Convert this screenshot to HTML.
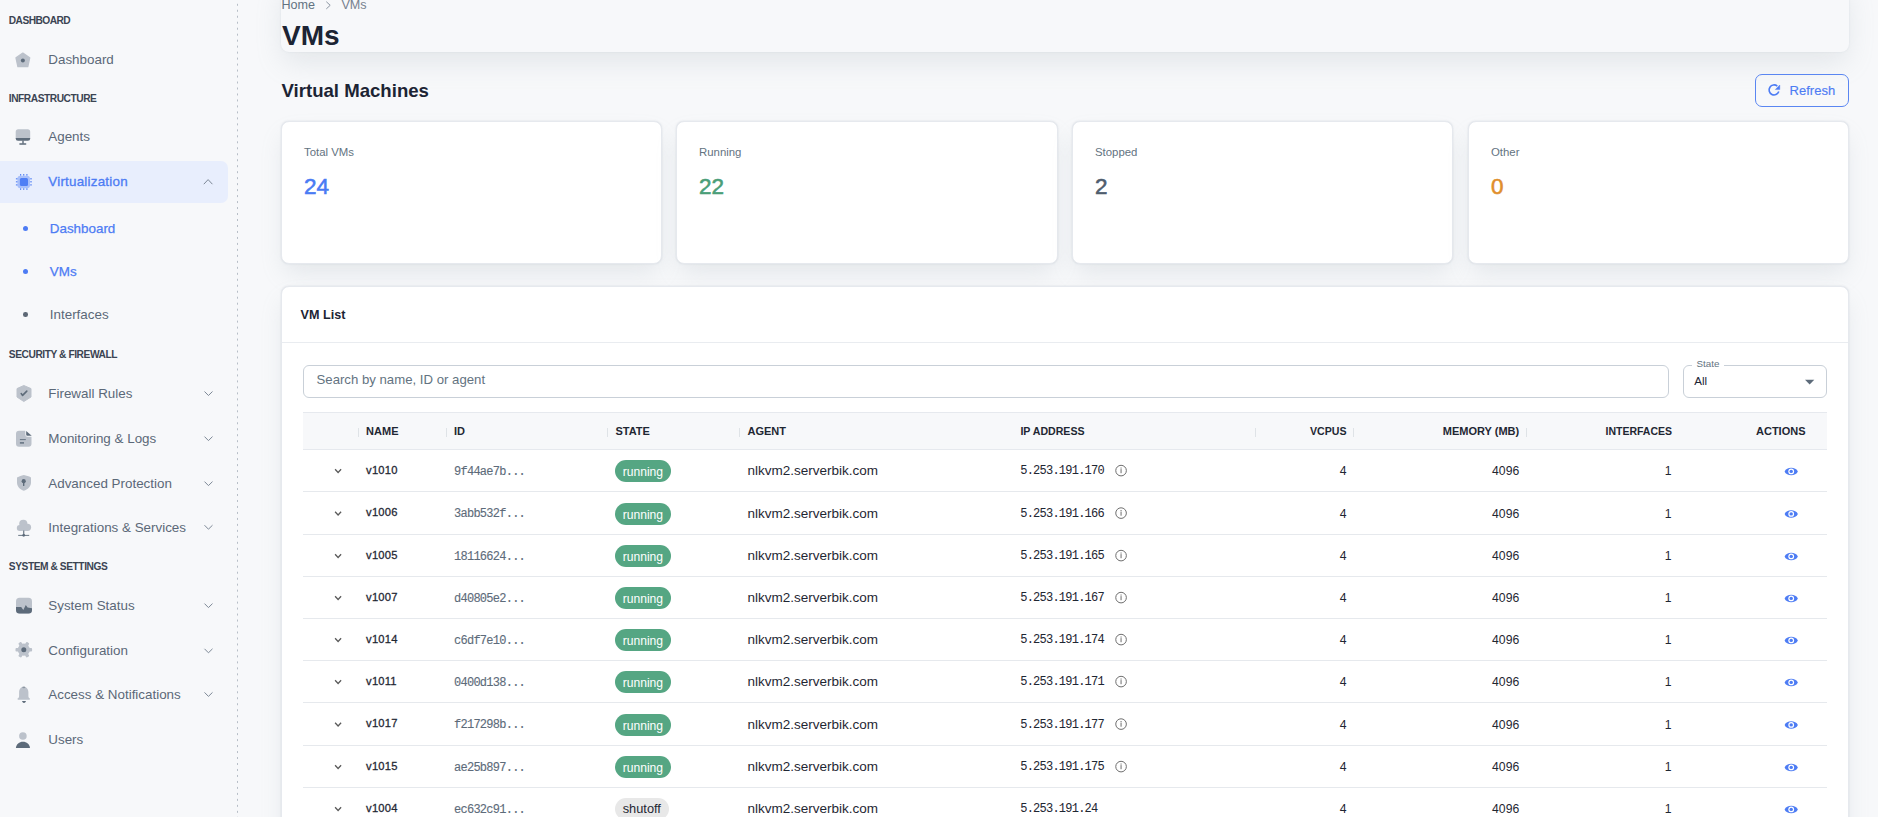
<!DOCTYPE html><html><head><meta charset="utf-8"><style>
html,body{margin:0;padding:0;}
body{width:1878px;height:817px;overflow:hidden;position:relative;background:#f7f8fa;font-family:'Liberation Sans', sans-serif;}
.t{position:absolute;white-space:nowrap;}
.b{position:absolute;}
</style></head><body>
<svg class="b" style="left:236px;top:0;width:3px;height:817px" viewBox="0 0 3 817"><line x1="1.5" y1="0" x2="1.5" y2="817" stroke="#b7bec7" stroke-width="1" stroke-dasharray="2 3.978" stroke-dashoffset="-3.8"/></svg>
<div class="t" style="left:8.80px;top:16.26px;font-size:10.2px;line-height:10.2px;color:#3b4452;font-weight:700;font-family:'Liberation Sans', sans-serif;letter-spacing:-0.55px">DASHBOARD</div>
<div class="t" style="left:8.80px;top:94.06px;font-size:10.2px;line-height:10.2px;color:#3b4452;font-weight:700;font-family:'Liberation Sans', sans-serif;letter-spacing:-0.45px">INFRASTRUCTURE</div>
<div class="t" style="left:8.80px;top:350.36px;font-size:10.2px;line-height:10.2px;color:#3b4452;font-weight:700;font-family:'Liberation Sans', sans-serif;letter-spacing:-0.43px">SECURITY &amp; FIREWALL</div>
<div class="t" style="left:8.80px;top:561.86px;font-size:10.2px;line-height:10.2px;color:#3b4452;font-weight:700;font-family:'Liberation Sans', sans-serif;letter-spacing:-0.43px">SYSTEM &amp; SETTINGS</div>
<div class="b" style="left:-8px;top:161px;width:236px;height:42px;background:#e8eefd;border-radius:7px"></div>
<svg class="b" style="left:10px;top:45px;width:30px;height:30px" viewBox="0 0 30 30"><path d="M12.85 8.1 L19.7 12.9 L17.8 21.5 L7.9 21.5 L6.0 12.9 Z" fill="#bcc2cb" stroke="#bcc2cb" stroke-width="1.3" stroke-linejoin="round"/><circle cx="12.85" cy="15.6" r="2" fill="#5d6b7a"/></svg>
<div class="t" style="left:48.30px;top:52.75px;font-size:13.4px;line-height:13.4px;color:#5b6878;font-weight:400;font-family:'Liberation Sans', sans-serif;">Dashboard</div>
<svg class="b" style="left:10px;top:122px;width:30px;height:30px" viewBox="0 0 30 30"><path d="M8.2 7.3 H17.7 A2.5 2.5 0 0 1 20.2 9.8 V16 H5.7 V9.8 A2.5 2.5 0 0 1 8.2 7.3Z" fill="#bcc2cb"/><path d="M5.7 16 H20.2 V16.4 A2.3 2.3 0 0 1 17.9 18.7 H8 A2.3 2.3 0 0 1 5.7 16.4Z" fill="#5d6b7a"/><rect x="12.3" y="18.5" width="1.4" height="3.2" fill="#5d6b7a"/><rect x="9.2" y="21.2" width="7.2" height="1.6" rx="0.8" fill="#5d6b7a"/></svg>
<div class="t" style="left:48.30px;top:130.45px;font-size:13.4px;line-height:13.4px;color:#5b6878;font-weight:400;font-family:'Liberation Sans', sans-serif;">Agents</div>
<svg class="b" style="left:10px;top:167px;width:30px;height:30px" viewBox="0 0 30 30"><rect x="7.4" y="8.8" width="12.6" height="12.4" rx="3" fill="#a8bffa"/><rect x="9.9" y="11" width="8.1" height="7.9" rx="1.5" fill="#4f7ef5"/><rect x="10.0" y="7" width="1.2" height="1.6" fill="#5a86f5"/><rect x="10.0" y="21.3" width="1.2" height="1.6" fill="#5a86f5"/><rect x="13.1" y="7" width="1.2" height="1.6" fill="#5a86f5"/><rect x="13.1" y="21.3" width="1.2" height="1.6" fill="#5a86f5"/><rect x="16.299999999999997" y="7" width="1.2" height="1.6" fill="#5a86f5"/><rect x="16.299999999999997" y="21.3" width="1.2" height="1.6" fill="#5a86f5"/><rect x="5.9" y="11.200000000000001" width="1.6" height="1.2" fill="#5a86f5"/><rect x="20.2" y="11.200000000000001" width="1.6" height="1.2" fill="#5a86f5"/><rect x="5.9" y="14.200000000000001" width="1.6" height="1.2" fill="#5a86f5"/><rect x="20.2" y="14.200000000000001" width="1.6" height="1.2" fill="#5a86f5"/><rect x="5.9" y="17.299999999999997" width="1.6" height="1.2" fill="#5a86f5"/><rect x="20.2" y="17.299999999999997" width="1.6" height="1.2" fill="#5a86f5"/></svg>
<div class="t" style="left:48.30px;top:174.85px;font-size:13.4px;line-height:13.4px;color:#4d7cf4;font-weight:400;font-family:'Liberation Sans', sans-serif;letter-spacing:0.22px;-webkit-text-stroke:0.3px #4d7cf4">Virtualization</div>
<svg class="b" style="left:200px;top:175px;width:16px;height:12px" viewBox="0 0 16 12"><path d="M3.8 9.2 L8.1 4.6 L12.4 9.2" fill="none" stroke="#7d8896" stroke-width="1"/></svg>
<svg class="b" style="left:10px;top:378px;width:30px;height:30px" viewBox="0 0 30 30"><path d="M13.8 7.5 L21 10.6 V19 L13.8 23.5 L7 19 V10.6 Z" fill="#bcc2cb" stroke="#bcc2cb" stroke-width="1" stroke-linejoin="round"/><path d="M11.2 15.6 L12.6 17.4 L16.8 13.1" fill="none" stroke="#5d6b7a" stroke-width="1.6" stroke-linecap="round" stroke-linejoin="round"/></svg>
<div class="t" style="left:48.30px;top:386.95px;font-size:13.4px;line-height:13.4px;color:#5b6878;font-weight:400;font-family:'Liberation Sans', sans-serif;">Firewall Rules</div>
<svg class="b" style="left:200px;top:387px;width:16px;height:12px" viewBox="0 0 16 12"><path d="M4.5 4.50 L8.45 8.50 L12.5 4.50" fill="none" stroke="#7d8896" stroke-width="1"/></svg>
<svg class="b" style="left:10px;top:423px;width:30px;height:30px" viewBox="0 0 30 30"><path d="M9 7.7 H15.3 V11.5 A2.3 2.3 0 0 0 17.6 13.8 H21.5 V20.7 A3 3 0 0 1 18.5 23.7 H9 A3 3 0 0 1 6 20.7 V10.7 A3 3 0 0 1 9 7.7Z" fill="#bcc2cb"/><path d="M16.2 7.9 L21.7 12.8 H17.2 A1 1 0 0 1 16.2 11.8Z" fill="#5d6b7a"/><rect x="9.9" y="16.2" width="5.9" height="0.9" fill="#5d6b7a"/><rect x="9.9" y="19.2" width="4.1" height="1.4" fill="#5d6b7a"/></svg>
<div class="t" style="left:48.30px;top:432.05px;font-size:13.4px;line-height:13.4px;color:#5b6878;font-weight:400;font-family:'Liberation Sans', sans-serif;">Monitoring &amp; Logs</div>
<svg class="b" style="left:200px;top:432px;width:16px;height:12px" viewBox="0 0 16 12"><path d="M4.5 4.60 L8.45 8.60 L12.5 4.60" fill="none" stroke="#7d8896" stroke-width="1"/></svg>
<svg class="b" style="left:10px;top:468px;width:30px;height:30px" viewBox="0 0 30 30"><path d="M13.8 7 C11.5 7.4 9.2 8.3 7 9.4 V14.5 C7 18.5 10 21.8 13.8 22.7 C17.6 21.8 21 18.5 21 14.5 V9.4 C18.8 8.3 16.2 7.4 13.8 7Z" fill="#bcc2cb"/><circle cx="13.7" cy="13.2" r="2.1" fill="#5d6b7a"/><rect x="13" y="14" width="1.4" height="4" rx="0.5" fill="#5d6b7a"/></svg>
<div class="t" style="left:48.30px;top:477.05px;font-size:13.4px;line-height:13.4px;color:#5b6878;font-weight:400;font-family:'Liberation Sans', sans-serif;">Advanced Protection</div>
<svg class="b" style="left:200px;top:477px;width:16px;height:12px" viewBox="0 0 16 12"><path d="M4.5 4.60 L8.45 8.60 L12.5 4.60" fill="none" stroke="#7d8896" stroke-width="1"/></svg>
<svg class="b" style="left:10px;top:512px;width:30px;height:30px" viewBox="0 0 30 30"><circle cx="13.3" cy="11.8" r="4.1" fill="#bcc2cb"/><circle cx="17.5" cy="15.3" r="3.6" fill="#bcc2cb"/><circle cx="9.7" cy="16" r="2.9" fill="#bcc2cb"/><rect x="9.7" y="14" width="8" height="4.9" fill="#bcc2cb"/><rect x="13.2" y="18.5" width="1.1" height="4.5" fill="#5d6b7a"/><rect x="8.2" y="22.9" width="11" height="0.9" fill="#5d6b7a"/><circle cx="13.7" cy="23.3" r="1.4" fill="#5d6b7a"/></svg>
<div class="t" style="left:48.30px;top:520.65px;font-size:13.4px;line-height:13.4px;color:#5b6878;font-weight:400;font-family:'Liberation Sans', sans-serif;">Integrations &amp; Services</div>
<svg class="b" style="left:200px;top:521px;width:16px;height:12px" viewBox="0 0 16 12"><path d="M4.5 4.20 L8.45 8.20 L12.5 4.20" fill="none" stroke="#7d8896" stroke-width="1"/></svg>
<svg class="b" style="left:10px;top:590px;width:30px;height:30px" viewBox="0 0 30 30"><rect x="6" y="7.8" width="16" height="15.7" rx="3.5" fill="#bcc2cb"/><path d="M6 17 H11.2 L13.3 20 L15.8 15 L17.6 17.6 L22 18.2 V20 A3.5 3.5 0 0 1 18.5 23.5 H9.5 A3.5 3.5 0 0 1 6 20Z" fill="#5d6b7a"/></svg>
<div class="t" style="left:48.30px;top:599.05px;font-size:13.4px;line-height:13.4px;color:#5b6878;font-weight:400;font-family:'Liberation Sans', sans-serif;">System Status</div>
<svg class="b" style="left:200px;top:599px;width:16px;height:12px" viewBox="0 0 16 12"><path d="M4.5 4.60 L8.45 8.60 L12.5 4.60" fill="none" stroke="#7d8896" stroke-width="1"/></svg>
<svg class="b" style="left:10px;top:635px;width:30px;height:30px" viewBox="0 0 30 30"><circle cx="13.8" cy="14.7" r="6.1" fill="#bcc2cb"/><rect x="17.6" y="13" width="4.5" height="3.4" rx="0.9" fill="#bcc2cb" transform="rotate(0 13.8 14.7)"/><rect x="17.6" y="13" width="4.5" height="3.4" rx="0.9" fill="#bcc2cb" transform="rotate(60 13.8 14.7)"/><rect x="17.6" y="13" width="4.5" height="3.4" rx="0.9" fill="#bcc2cb" transform="rotate(120 13.8 14.7)"/><rect x="17.6" y="13" width="4.5" height="3.4" rx="0.9" fill="#bcc2cb" transform="rotate(180 13.8 14.7)"/><rect x="17.6" y="13" width="4.5" height="3.4" rx="0.9" fill="#bcc2cb" transform="rotate(240 13.8 14.7)"/><rect x="17.6" y="13" width="4.5" height="3.4" rx="0.9" fill="#bcc2cb" transform="rotate(300 13.8 14.7)"/><circle cx="13.8" cy="14.7" r="2.5" fill="#5d6b7a"/></svg>
<div class="t" style="left:48.30px;top:644.25px;font-size:13.4px;line-height:13.4px;color:#5b6878;font-weight:400;font-family:'Liberation Sans', sans-serif;">Configuration</div>
<svg class="b" style="left:200px;top:644px;width:16px;height:12px" viewBox="0 0 16 12"><path d="M4.5 4.80 L8.45 8.80 L12.5 4.80" fill="none" stroke="#7d8896" stroke-width="1"/></svg>
<svg class="b" style="left:10px;top:679px;width:30px;height:30px" viewBox="0 0 30 30"><path d="M13.7 7.8 C10.8 7.8 9.1 10.3 9.1 13.3 V17.3 C9.1 18.5 8.3 19.1 7.6 19.6 C7.3 19.9 7.5 20.8 8.2 20.8 H19.3 C20 20.8 20.2 19.9 19.9 19.6 C19.2 19.1 18.4 18.5 18.4 17.3 V13.3 C18.4 10.3 16.6 7.8 13.7 7.8Z" fill="#bcc2cb"/><ellipse cx="13.8" cy="8.4" rx="1.5" ry="0.8" fill="#5d6b7a" opacity="0.5"/><path d="M12.1 22.1 H15.9 C15.9 23.2 15 23.9 14 23.9 C13 23.9 12.1 23.2 12.1 22.1Z" fill="#5d6b7a"/></svg>
<div class="t" style="left:48.30px;top:687.85px;font-size:13.4px;line-height:13.4px;color:#5b6878;font-weight:400;font-family:'Liberation Sans', sans-serif;">Access &amp; Notifications</div>
<svg class="b" style="left:200px;top:688px;width:16px;height:12px" viewBox="0 0 16 12"><path d="M4.5 4.40 L8.45 8.40 L12.5 4.40" fill="none" stroke="#7d8896" stroke-width="1"/></svg>
<svg class="b" style="left:10px;top:724px;width:30px;height:30px" viewBox="0 0 30 30"><circle cx="12.9" cy="12" r="3.8" fill="#bcc2cb"/><path d="M5.9 24 C6.3 20.2 9.2 17.8 12.95 17.8 C16.7 17.8 19.6 20.2 20 24Z" fill="#5d6b7a"/></svg>
<div class="t" style="left:48.30px;top:732.85px;font-size:13.4px;line-height:13.4px;color:#5b6878;font-weight:400;font-family:'Liberation Sans', sans-serif;">Users</div>
<div class="b" style="left:23.0px;top:226.0px;width:5px;height:5px;border-radius:50%;background:#4d7cf4"></div>
<div class="t" style="left:49.80px;top:221.55px;font-size:13.4px;line-height:13.4px;color:#4d7cf4;font-weight:400;font-family:'Liberation Sans', sans-serif;-webkit-text-stroke:0.25px #4d7cf4">Dashboard</div>
<div class="b" style="left:23.0px;top:268.8px;width:5px;height:5px;border-radius:50%;background:#4d7cf4"></div>
<div class="t" style="left:49.80px;top:264.65px;font-size:13.4px;line-height:13.4px;color:#4d7cf4;font-weight:400;font-family:'Liberation Sans', sans-serif;-webkit-text-stroke:0.25px #4d7cf4">VMs</div>
<div class="b" style="left:23.2px;top:312.4px;width:4.6px;height:4.6px;border-radius:50%;background:#5d6875"></div>
<div class="t" style="left:49.80px;top:307.65px;font-size:13.4px;line-height:13.4px;color:#5b6878;font-weight:400;font-family:'Liberation Sans', sans-serif;">Interfaces</div>
<div class="b" style="left:281px;top:-20px;width:1568px;height:72px;background:#f7f8fa;border-radius:8px;box-shadow:0 0 2px rgba(145,158,171,0.18), 0 12px 28px -2px rgba(145,158,171,0.2)"></div>
<div class="t" style="left:281.50px;top:-1.47px;font-size:12.6px;line-height:12.6px;color:#637381;font-weight:400;font-family:'Liberation Sans', sans-serif;">Home</div>
<svg class="b" style="left:322px;top:0px;width:14px;height:14px" viewBox="0 0 14 14"><path d="M4.3 1.7 L8.2 5.3 L4.3 8.9" fill="none" stroke="#8c96a2" stroke-width="1"/></svg>
<div class="t" style="left:341.40px;top:-1.47px;font-size:12.6px;line-height:12.6px;color:#77828f;font-weight:400;font-family:'Liberation Sans', sans-serif;">VMs</div>
<div class="t" style="left:282.00px;top:22.19px;font-size:28px;line-height:28px;color:#1c2434;font-weight:700;font-family:'Liberation Sans', sans-serif;">VMs</div>
<div class="t" style="left:281.50px;top:81.65px;font-size:18.6px;line-height:18.6px;color:#1c2434;font-weight:700;font-family:'Liberation Sans', sans-serif;">Virtual Machines</div>
<div class="b" style="left:1755px;top:74px;width:92px;height:31px;border:1px solid #5a86f2;border-radius:7px"></div>
<svg class="b" style="left:1764px;top:80px;width:20px;height:20px" viewBox="0 0 20 20"><path d="M14.8 11.6 A5 5 0 1 1 13.3 6.1" fill="none" stroke="#4d7cf4" stroke-width="1.6"/><path d="M11.3 9.6 L15.8 5.0 L15.8 9.6Z" fill="#4d7cf4" stroke="#4d7cf4" stroke-width="0.4" stroke-linejoin="round"/></svg>
<div class="t" style="left:1789.60px;top:83.89px;font-size:13px;line-height:13px;color:#4d7cf4;font-weight:400;font-family:'Liberation Sans', sans-serif;-webkit-text-stroke:0.15px #4d7cf4">Refresh</div>
<div class="b" style="left:281px;top:121px;width:379px;height:141px;background:#fff;border:1px solid #e6e9ee;border-radius:8px;box-shadow:0 0 2px 0 rgba(145,158,171,0.28), 0 12px 24px -4px rgba(145,158,171,0.2)"></div>
<div class="t" style="left:304.00px;top:146.95px;font-size:11.4px;line-height:11.4px;color:#637381;font-weight:400;font-family:'Liberation Sans', sans-serif;">Total VMs</div>
<div class="t" style="left:304.00px;top:175.95px;font-size:22.5px;line-height:22.5px;color:#4a7bf4;font-weight:400;font-family:'Liberation Sans', sans-serif;-webkit-text-stroke:0.55px #4a7bf4">24</div>
<div class="b" style="left:676px;top:121px;width:380px;height:141px;background:#fff;border:1px solid #e6e9ee;border-radius:8px;box-shadow:0 0 2px 0 rgba(145,158,171,0.28), 0 12px 24px -4px rgba(145,158,171,0.2)"></div>
<div class="t" style="left:699.00px;top:146.95px;font-size:11.4px;line-height:11.4px;color:#637381;font-weight:400;font-family:'Liberation Sans', sans-serif;">Running</div>
<div class="t" style="left:699.00px;top:175.95px;font-size:22.5px;line-height:22.5px;color:#4a9e78;font-weight:400;font-family:'Liberation Sans', sans-serif;-webkit-text-stroke:0.55px #4a9e78">22</div>
<div class="b" style="left:1072px;top:121px;width:379px;height:141px;background:#fff;border:1px solid #e6e9ee;border-radius:8px;box-shadow:0 0 2px 0 rgba(145,158,171,0.28), 0 12px 24px -4px rgba(145,158,171,0.2)"></div>
<div class="t" style="left:1095.00px;top:146.95px;font-size:11.4px;line-height:11.4px;color:#637381;font-weight:400;font-family:'Liberation Sans', sans-serif;">Stopped</div>
<div class="t" style="left:1095.00px;top:175.95px;font-size:22.5px;line-height:22.5px;color:#4f5d6e;font-weight:400;font-family:'Liberation Sans', sans-serif;-webkit-text-stroke:0.55px #4f5d6e">2</div>
<div class="b" style="left:1468px;top:121px;width:379px;height:141px;background:#fff;border:1px solid #e6e9ee;border-radius:8px;box-shadow:0 0 2px 0 rgba(145,158,171,0.28), 0 12px 24px -4px rgba(145,158,171,0.2)"></div>
<div class="t" style="left:1491.00px;top:146.95px;font-size:11.4px;line-height:11.4px;color:#637381;font-weight:400;font-family:'Liberation Sans', sans-serif;">Other</div>
<div class="t" style="left:1491.00px;top:175.95px;font-size:22.5px;line-height:22.5px;color:#e08e2b;font-weight:400;font-family:'Liberation Sans', sans-serif;-webkit-text-stroke:0.55px #e08e2b">0</div>
<div class="b" style="left:281px;top:286px;width:1566px;height:600px;background:#fff;border:1px solid #e6e9ee;border-radius:8px;box-shadow:0 0 2px 0 rgba(145,158,171,0.28), 0 12px 24px -4px rgba(145,158,171,0.2)"></div>
<div class="t" style="left:300.60px;top:309.03px;font-size:12.6px;line-height:12.6px;color:#1c2434;font-weight:700;font-family:'Liberation Sans', sans-serif;">VM List</div>
<div class="b" style="left:282px;top:342px;width:1566px;height:1px;background:#e9ecf0"></div>
<div class="b" style="left:303px;top:365px;width:1364px;height:31px;border:1px solid #c9d0d8;border-radius:6px"></div>
<div class="t" style="left:316.50px;top:372.82px;font-size:13.2px;line-height:13.2px;color:#637381;font-weight:400;font-family:'Liberation Sans', sans-serif;">Search by name, ID or agent</div>
<div class="b" style="left:1683px;top:365px;width:142px;height:31px;border:1px solid #c9d0d8;border-radius:6px"></div>
<div class="b" style="left:1692px;top:362px;width:32px;height:6px;background:#fff"></div>
<div class="t" style="left:1696.50px;top:358.90px;font-size:9.8px;line-height:9.8px;color:#637381;font-weight:400;font-family:'Liberation Sans', sans-serif;">State</div>
<div class="t" style="left:1694.30px;top:375.28px;font-size:11.6px;line-height:11.6px;color:#1c2434;font-weight:400;font-family:'Liberation Sans', sans-serif;">All</div>
<svg class="b" style="left:1800px;top:374px;width:20px;height:14px" viewBox="0 0 20 14"><path d="M5 5.7 L14.3 5.7 L9.65 10.4Z" fill="#5d6b7a"/></svg>
<div class="b" style="left:303px;top:412px;width:1524px;height:37px;background:#f7f8fa;border-top:1px solid #e6e9ee;border-bottom:1px solid #e6e9ee;box-sizing:border-box;height:38px"></div>
<div class="b" style="left:358px;top:428px;width:1px;height:9px;background:#dfe3e7"></div>
<div class="b" style="left:446px;top:428px;width:1px;height:9px;background:#dfe3e7"></div>
<div class="b" style="left:607px;top:428px;width:1px;height:9px;background:#dfe3e7"></div>
<div class="b" style="left:739px;top:428px;width:1px;height:9px;background:#dfe3e7"></div>
<div class="b" style="left:1255px;top:428px;width:1px;height:9px;background:#dfe3e7"></div>
<div class="b" style="left:1353px;top:428px;width:1px;height:9px;background:#dfe3e7"></div>
<div class="b" style="left:1526px;top:428px;width:1px;height:9px;background:#dfe3e7"></div>
<div class="t" style="left:366.10px;top:425.59px;font-size:11px;line-height:11px;color:#1f2733;font-weight:700;font-family:'Liberation Sans', sans-serif;">NAME</div>
<div class="t" style="left:453.90px;top:425.59px;font-size:11px;line-height:11px;color:#1f2733;font-weight:700;font-family:'Liberation Sans', sans-serif;">ID</div>
<div class="t" style="left:615.40px;top:425.59px;font-size:11px;line-height:11px;color:#1f2733;font-weight:700;font-family:'Liberation Sans', sans-serif;">STATE</div>
<div class="t" style="left:747.50px;top:425.59px;font-size:11px;line-height:11px;color:#1f2733;font-weight:700;font-family:'Liberation Sans', sans-serif;">AGENT</div>
<div class="t" style="left:1020.40px;top:425.92px;font-size:10.6px;line-height:10.6px;color:#1f2733;font-weight:700;font-family:'Liberation Sans', sans-serif;">IP ADDRESS</div>
<div class="t" style="right:531.50px;top:425.92px;font-size:10.6px;line-height:10.6px;color:#1f2733;font-weight:700;font-family:'Liberation Sans', sans-serif;">VCPUS</div>
<div class="t" style="right:358.80px;top:425.59px;font-size:11px;line-height:11px;color:#1f2733;font-weight:700;font-family:'Liberation Sans', sans-serif;">MEMORY (MB)</div>
<div class="t" style="right:206.00px;top:426.01px;font-size:10.5px;line-height:10.5px;color:#1f2733;font-weight:700;font-family:'Liberation Sans', sans-serif;">INTERFACES</div>
<div class="t" style="left:1756.00px;top:425.59px;font-size:11px;line-height:11px;color:#1f2733;font-weight:700;font-family:'Liberation Sans', sans-serif;">ACTIONS</div>
<div class="b" style="left:303px;top:491px;width:1524px;height:1px;background:#e6e9ed"></div>
<svg class="b" style="left:330px;top:462px;width:16px;height:16px" viewBox="0 0 16 16"><path d="M5.1 7.30 L8.1 10.50 L11.1 7.30" fill="none" stroke="#5a5a5a" stroke-width="1.3"/></svg>
<div class="t" style="left:366.10px;top:464.92px;font-size:11.2px;line-height:11.2px;color:#1f2733;font-weight:400;font-family:'Liberation Sans', sans-serif;letter-spacing:0.2px;-webkit-text-stroke:0.28px #1f2733">v1010</div>
<div class="t" style="left:454.00px;top:465.91px;font-size:12px;line-height:12px;color:#5d6b7a;font-weight:400;font-family:'Liberation Mono', monospace;letter-spacing:-0.74px;-webkit-text-stroke:0.12px #5d6b7a">9f44ae7b...</div>
<div class="b" style="left:615px;top:460.10px;width:56px;height:22px;border-radius:11px;background:#55a683"></div>
<div class="t" style="left:622.70px;top:466.05px;font-size:12.1px;line-height:12.1px;color:#fff;font-weight:400;font-family:'Liberation Sans', sans-serif;">running</div>
<div class="t" style="left:747.50px;top:464.07px;font-size:13.5px;line-height:13.5px;color:#1f2733;font-weight:400;font-family:'Liberation Sans', sans-serif;">nlkvm2.serverbik.com</div>
<div class="t" style="left:1020.20px;top:465.11px;font-size:12px;line-height:12px;color:#1f2733;font-weight:400;font-family:'Liberation Mono', monospace;letter-spacing:-0.76px;-webkit-text-stroke:0.05px #1f2733">5.253.191.170</div>
<svg class="b" style="left:1113px;top:462px;width:16px;height:16px" viewBox="0 0 16 16"><circle cx="8.06" cy="8.60" r="5.3" fill="none" stroke="#6e6e6e" stroke-width="1"/><rect x="7.56" y="5.50" width="1" height="1.1" fill="#6e6e6e"/><rect x="7.56" y="7.10" width="1" height="4.1" fill="#6e6e6e"/></svg>
<div class="t" style="right:531.50px;top:465.17px;font-size:12.2px;line-height:12.2px;color:#1f2733;font-weight:400;font-family:'Liberation Sans', sans-serif;">4</div>
<div class="t" style="right:358.80px;top:465.17px;font-size:12.2px;line-height:12.2px;color:#1f2733;font-weight:400;font-family:'Liberation Sans', sans-serif;">4096</div>
<div class="t" style="right:206.40px;top:465.17px;font-size:12.2px;line-height:12.2px;color:#1f2733;font-weight:400;font-family:'Liberation Sans', sans-serif;">1</div>
<svg class="b" style="left:1781px;top:462px;width:20px;height:16px" viewBox="0 0 20 16"><path d="M3.6 9.40 C5.5 4.40 14.8 4.40 16.9 9.40 C14.8 14.40 5.5 14.40 3.6 9.40Z" fill="#4d7cf4"/><circle cx="10.2" cy="9.40" r="2.9" fill="#fff"/><circle cx="10.2" cy="9.40" r="1.7" fill="#4d7cf4"/></svg>
<div class="b" style="left:303px;top:534px;width:1524px;height:1px;background:#e6e9ed"></div>
<svg class="b" style="left:330px;top:505px;width:16px;height:16px" viewBox="0 0 16 16"><path d="M5.1 6.80 L8.1 10.00 L11.1 6.80" fill="none" stroke="#5a5a5a" stroke-width="1.3"/></svg>
<div class="t" style="left:366.10px;top:507.42px;font-size:11.2px;line-height:11.2px;color:#1f2733;font-weight:400;font-family:'Liberation Sans', sans-serif;letter-spacing:0.2px;-webkit-text-stroke:0.28px #1f2733">v1006</div>
<div class="t" style="left:454.00px;top:508.41px;font-size:12px;line-height:12px;color:#5d6b7a;font-weight:400;font-family:'Liberation Mono', monospace;letter-spacing:-0.74px;-webkit-text-stroke:0.12px #5d6b7a">3abb532f...</div>
<div class="b" style="left:615px;top:502.60px;width:56px;height:22px;border-radius:11px;background:#55a683"></div>
<div class="t" style="left:622.70px;top:508.55px;font-size:12.1px;line-height:12.1px;color:#fff;font-weight:400;font-family:'Liberation Sans', sans-serif;">running</div>
<div class="t" style="left:747.50px;top:506.57px;font-size:13.5px;line-height:13.5px;color:#1f2733;font-weight:400;font-family:'Liberation Sans', sans-serif;">nlkvm2.serverbik.com</div>
<div class="t" style="left:1020.20px;top:507.61px;font-size:12px;line-height:12px;color:#1f2733;font-weight:400;font-family:'Liberation Mono', monospace;letter-spacing:-0.76px;-webkit-text-stroke:0.05px #1f2733">5.253.191.166</div>
<svg class="b" style="left:1113px;top:505px;width:16px;height:16px" viewBox="0 0 16 16"><circle cx="8.06" cy="8.10" r="5.3" fill="none" stroke="#6e6e6e" stroke-width="1"/><rect x="7.56" y="5.00" width="1" height="1.1" fill="#6e6e6e"/><rect x="7.56" y="6.60" width="1" height="4.1" fill="#6e6e6e"/></svg>
<div class="t" style="right:531.50px;top:507.67px;font-size:12.2px;line-height:12.2px;color:#1f2733;font-weight:400;font-family:'Liberation Sans', sans-serif;">4</div>
<div class="t" style="right:358.80px;top:507.67px;font-size:12.2px;line-height:12.2px;color:#1f2733;font-weight:400;font-family:'Liberation Sans', sans-serif;">4096</div>
<div class="t" style="right:206.40px;top:507.67px;font-size:12.2px;line-height:12.2px;color:#1f2733;font-weight:400;font-family:'Liberation Sans', sans-serif;">1</div>
<svg class="b" style="left:1781px;top:505px;width:20px;height:16px" viewBox="0 0 20 16"><path d="M3.6 8.90 C5.5 3.90 14.8 3.90 16.9 8.90 C14.8 13.90 5.5 13.90 3.6 8.90Z" fill="#4d7cf4"/><circle cx="10.2" cy="8.90" r="2.9" fill="#fff"/><circle cx="10.2" cy="8.90" r="1.7" fill="#4d7cf4"/></svg>
<div class="b" style="left:303px;top:576px;width:1524px;height:1px;background:#e6e9ed"></div>
<svg class="b" style="left:330px;top:547px;width:16px;height:16px" viewBox="0 0 16 16"><path d="M5.1 7.30 L8.1 10.50 L11.1 7.30" fill="none" stroke="#5a5a5a" stroke-width="1.3"/></svg>
<div class="t" style="left:366.10px;top:549.92px;font-size:11.2px;line-height:11.2px;color:#1f2733;font-weight:400;font-family:'Liberation Sans', sans-serif;letter-spacing:0.2px;-webkit-text-stroke:0.28px #1f2733">v1005</div>
<div class="t" style="left:454.00px;top:550.91px;font-size:12px;line-height:12px;color:#5d6b7a;font-weight:400;font-family:'Liberation Mono', monospace;letter-spacing:-0.74px;-webkit-text-stroke:0.12px #5d6b7a">18116624...</div>
<div class="b" style="left:615px;top:545.10px;width:56px;height:22px;border-radius:11px;background:#55a683"></div>
<div class="t" style="left:622.70px;top:551.05px;font-size:12.1px;line-height:12.1px;color:#fff;font-weight:400;font-family:'Liberation Sans', sans-serif;">running</div>
<div class="t" style="left:747.50px;top:549.07px;font-size:13.5px;line-height:13.5px;color:#1f2733;font-weight:400;font-family:'Liberation Sans', sans-serif;">nlkvm2.serverbik.com</div>
<div class="t" style="left:1020.20px;top:550.11px;font-size:12px;line-height:12px;color:#1f2733;font-weight:400;font-family:'Liberation Mono', monospace;letter-spacing:-0.76px;-webkit-text-stroke:0.05px #1f2733">5.253.191.165</div>
<svg class="b" style="left:1113px;top:547px;width:16px;height:16px" viewBox="0 0 16 16"><circle cx="8.06" cy="8.60" r="5.3" fill="none" stroke="#6e6e6e" stroke-width="1"/><rect x="7.56" y="5.50" width="1" height="1.1" fill="#6e6e6e"/><rect x="7.56" y="7.10" width="1" height="4.1" fill="#6e6e6e"/></svg>
<div class="t" style="right:531.50px;top:550.17px;font-size:12.2px;line-height:12.2px;color:#1f2733;font-weight:400;font-family:'Liberation Sans', sans-serif;">4</div>
<div class="t" style="right:358.80px;top:550.17px;font-size:12.2px;line-height:12.2px;color:#1f2733;font-weight:400;font-family:'Liberation Sans', sans-serif;">4096</div>
<div class="t" style="right:206.40px;top:550.17px;font-size:12.2px;line-height:12.2px;color:#1f2733;font-weight:400;font-family:'Liberation Sans', sans-serif;">1</div>
<svg class="b" style="left:1781px;top:547px;width:20px;height:16px" viewBox="0 0 20 16"><path d="M3.6 9.40 C5.5 4.40 14.8 4.40 16.9 9.40 C14.8 14.40 5.5 14.40 3.6 9.40Z" fill="#4d7cf4"/><circle cx="10.2" cy="9.40" r="2.9" fill="#fff"/><circle cx="10.2" cy="9.40" r="1.7" fill="#4d7cf4"/></svg>
<div class="b" style="left:303px;top:618px;width:1524px;height:1px;background:#e6e9ed"></div>
<svg class="b" style="left:330px;top:589px;width:16px;height:16px" viewBox="0 0 16 16"><path d="M5.1 7.30 L8.1 10.50 L11.1 7.30" fill="none" stroke="#5a5a5a" stroke-width="1.3"/></svg>
<div class="t" style="left:366.10px;top:591.92px;font-size:11.2px;line-height:11.2px;color:#1f2733;font-weight:400;font-family:'Liberation Sans', sans-serif;letter-spacing:0.2px;-webkit-text-stroke:0.28px #1f2733">v1007</div>
<div class="t" style="left:454.00px;top:592.91px;font-size:12px;line-height:12px;color:#5d6b7a;font-weight:400;font-family:'Liberation Mono', monospace;letter-spacing:-0.74px;-webkit-text-stroke:0.12px #5d6b7a">d40805e2...</div>
<div class="b" style="left:615px;top:587.10px;width:56px;height:22px;border-radius:11px;background:#55a683"></div>
<div class="t" style="left:622.70px;top:593.05px;font-size:12.1px;line-height:12.1px;color:#fff;font-weight:400;font-family:'Liberation Sans', sans-serif;">running</div>
<div class="t" style="left:747.50px;top:591.07px;font-size:13.5px;line-height:13.5px;color:#1f2733;font-weight:400;font-family:'Liberation Sans', sans-serif;">nlkvm2.serverbik.com</div>
<div class="t" style="left:1020.20px;top:592.11px;font-size:12px;line-height:12px;color:#1f2733;font-weight:400;font-family:'Liberation Mono', monospace;letter-spacing:-0.76px;-webkit-text-stroke:0.05px #1f2733">5.253.191.167</div>
<svg class="b" style="left:1113px;top:589px;width:16px;height:16px" viewBox="0 0 16 16"><circle cx="8.06" cy="8.60" r="5.3" fill="none" stroke="#6e6e6e" stroke-width="1"/><rect x="7.56" y="5.50" width="1" height="1.1" fill="#6e6e6e"/><rect x="7.56" y="7.10" width="1" height="4.1" fill="#6e6e6e"/></svg>
<div class="t" style="right:531.50px;top:592.17px;font-size:12.2px;line-height:12.2px;color:#1f2733;font-weight:400;font-family:'Liberation Sans', sans-serif;">4</div>
<div class="t" style="right:358.80px;top:592.17px;font-size:12.2px;line-height:12.2px;color:#1f2733;font-weight:400;font-family:'Liberation Sans', sans-serif;">4096</div>
<div class="t" style="right:206.40px;top:592.17px;font-size:12.2px;line-height:12.2px;color:#1f2733;font-weight:400;font-family:'Liberation Sans', sans-serif;">1</div>
<svg class="b" style="left:1781px;top:589px;width:20px;height:16px" viewBox="0 0 20 16"><path d="M3.6 9.40 C5.5 4.40 14.8 4.40 16.9 9.40 C14.8 14.40 5.5 14.40 3.6 9.40Z" fill="#4d7cf4"/><circle cx="10.2" cy="9.40" r="2.9" fill="#fff"/><circle cx="10.2" cy="9.40" r="1.7" fill="#4d7cf4"/></svg>
<div class="b" style="left:303px;top:660px;width:1524px;height:1px;background:#e6e9ed"></div>
<svg class="b" style="left:330px;top:631px;width:16px;height:16px" viewBox="0 0 16 16"><path d="M5.1 7.30 L8.1 10.50 L11.1 7.30" fill="none" stroke="#5a5a5a" stroke-width="1.3"/></svg>
<div class="t" style="left:366.10px;top:633.92px;font-size:11.2px;line-height:11.2px;color:#1f2733;font-weight:400;font-family:'Liberation Sans', sans-serif;letter-spacing:0.2px;-webkit-text-stroke:0.28px #1f2733">v1014</div>
<div class="t" style="left:454.00px;top:634.91px;font-size:12px;line-height:12px;color:#5d6b7a;font-weight:400;font-family:'Liberation Mono', monospace;letter-spacing:-0.74px;-webkit-text-stroke:0.12px #5d6b7a">c6df7e10...</div>
<div class="b" style="left:615px;top:629.10px;width:56px;height:22px;border-radius:11px;background:#55a683"></div>
<div class="t" style="left:622.70px;top:635.05px;font-size:12.1px;line-height:12.1px;color:#fff;font-weight:400;font-family:'Liberation Sans', sans-serif;">running</div>
<div class="t" style="left:747.50px;top:633.07px;font-size:13.5px;line-height:13.5px;color:#1f2733;font-weight:400;font-family:'Liberation Sans', sans-serif;">nlkvm2.serverbik.com</div>
<div class="t" style="left:1020.20px;top:634.11px;font-size:12px;line-height:12px;color:#1f2733;font-weight:400;font-family:'Liberation Mono', monospace;letter-spacing:-0.76px;-webkit-text-stroke:0.05px #1f2733">5.253.191.174</div>
<svg class="b" style="left:1113px;top:631px;width:16px;height:16px" viewBox="0 0 16 16"><circle cx="8.06" cy="8.60" r="5.3" fill="none" stroke="#6e6e6e" stroke-width="1"/><rect x="7.56" y="5.50" width="1" height="1.1" fill="#6e6e6e"/><rect x="7.56" y="7.10" width="1" height="4.1" fill="#6e6e6e"/></svg>
<div class="t" style="right:531.50px;top:634.17px;font-size:12.2px;line-height:12.2px;color:#1f2733;font-weight:400;font-family:'Liberation Sans', sans-serif;">4</div>
<div class="t" style="right:358.80px;top:634.17px;font-size:12.2px;line-height:12.2px;color:#1f2733;font-weight:400;font-family:'Liberation Sans', sans-serif;">4096</div>
<div class="t" style="right:206.40px;top:634.17px;font-size:12.2px;line-height:12.2px;color:#1f2733;font-weight:400;font-family:'Liberation Sans', sans-serif;">1</div>
<svg class="b" style="left:1781px;top:631px;width:20px;height:16px" viewBox="0 0 20 16"><path d="M3.6 9.40 C5.5 4.40 14.8 4.40 16.9 9.40 C14.8 14.40 5.5 14.40 3.6 9.40Z" fill="#4d7cf4"/><circle cx="10.2" cy="9.40" r="2.9" fill="#fff"/><circle cx="10.2" cy="9.40" r="1.7" fill="#4d7cf4"/></svg>
<div class="b" style="left:303px;top:702px;width:1524px;height:1px;background:#e6e9ed"></div>
<svg class="b" style="left:330px;top:673px;width:16px;height:16px" viewBox="0 0 16 16"><path d="M5.1 7.30 L8.1 10.50 L11.1 7.30" fill="none" stroke="#5a5a5a" stroke-width="1.3"/></svg>
<div class="t" style="left:366.10px;top:675.92px;font-size:11.2px;line-height:11.2px;color:#1f2733;font-weight:400;font-family:'Liberation Sans', sans-serif;letter-spacing:0.2px;-webkit-text-stroke:0.28px #1f2733">v1011</div>
<div class="t" style="left:454.00px;top:676.91px;font-size:12px;line-height:12px;color:#5d6b7a;font-weight:400;font-family:'Liberation Mono', monospace;letter-spacing:-0.74px;-webkit-text-stroke:0.12px #5d6b7a">0400d138...</div>
<div class="b" style="left:615px;top:671.10px;width:56px;height:22px;border-radius:11px;background:#55a683"></div>
<div class="t" style="left:622.70px;top:677.05px;font-size:12.1px;line-height:12.1px;color:#fff;font-weight:400;font-family:'Liberation Sans', sans-serif;">running</div>
<div class="t" style="left:747.50px;top:675.07px;font-size:13.5px;line-height:13.5px;color:#1f2733;font-weight:400;font-family:'Liberation Sans', sans-serif;">nlkvm2.serverbik.com</div>
<div class="t" style="left:1020.20px;top:676.11px;font-size:12px;line-height:12px;color:#1f2733;font-weight:400;font-family:'Liberation Mono', monospace;letter-spacing:-0.76px;-webkit-text-stroke:0.05px #1f2733">5.253.191.171</div>
<svg class="b" style="left:1113px;top:673px;width:16px;height:16px" viewBox="0 0 16 16"><circle cx="8.06" cy="8.60" r="5.3" fill="none" stroke="#6e6e6e" stroke-width="1"/><rect x="7.56" y="5.50" width="1" height="1.1" fill="#6e6e6e"/><rect x="7.56" y="7.10" width="1" height="4.1" fill="#6e6e6e"/></svg>
<div class="t" style="right:531.50px;top:676.17px;font-size:12.2px;line-height:12.2px;color:#1f2733;font-weight:400;font-family:'Liberation Sans', sans-serif;">4</div>
<div class="t" style="right:358.80px;top:676.17px;font-size:12.2px;line-height:12.2px;color:#1f2733;font-weight:400;font-family:'Liberation Sans', sans-serif;">4096</div>
<div class="t" style="right:206.40px;top:676.17px;font-size:12.2px;line-height:12.2px;color:#1f2733;font-weight:400;font-family:'Liberation Sans', sans-serif;">1</div>
<svg class="b" style="left:1781px;top:673px;width:20px;height:16px" viewBox="0 0 20 16"><path d="M3.6 9.40 C5.5 4.40 14.8 4.40 16.9 9.40 C14.8 14.40 5.5 14.40 3.6 9.40Z" fill="#4d7cf4"/><circle cx="10.2" cy="9.40" r="2.9" fill="#fff"/><circle cx="10.2" cy="9.40" r="1.7" fill="#4d7cf4"/></svg>
<div class="b" style="left:303px;top:745px;width:1524px;height:1px;background:#e6e9ed"></div>
<svg class="b" style="left:330px;top:716px;width:16px;height:16px" viewBox="0 0 16 16"><path d="M5.1 6.80 L8.1 10.00 L11.1 6.80" fill="none" stroke="#5a5a5a" stroke-width="1.3"/></svg>
<div class="t" style="left:366.10px;top:718.42px;font-size:11.2px;line-height:11.2px;color:#1f2733;font-weight:400;font-family:'Liberation Sans', sans-serif;letter-spacing:0.2px;-webkit-text-stroke:0.28px #1f2733">v1017</div>
<div class="t" style="left:454.00px;top:719.41px;font-size:12px;line-height:12px;color:#5d6b7a;font-weight:400;font-family:'Liberation Mono', monospace;letter-spacing:-0.74px;-webkit-text-stroke:0.12px #5d6b7a">f217298b...</div>
<div class="b" style="left:615px;top:713.60px;width:56px;height:22px;border-radius:11px;background:#55a683"></div>
<div class="t" style="left:622.70px;top:719.55px;font-size:12.1px;line-height:12.1px;color:#fff;font-weight:400;font-family:'Liberation Sans', sans-serif;">running</div>
<div class="t" style="left:747.50px;top:717.57px;font-size:13.5px;line-height:13.5px;color:#1f2733;font-weight:400;font-family:'Liberation Sans', sans-serif;">nlkvm2.serverbik.com</div>
<div class="t" style="left:1020.20px;top:718.61px;font-size:12px;line-height:12px;color:#1f2733;font-weight:400;font-family:'Liberation Mono', monospace;letter-spacing:-0.76px;-webkit-text-stroke:0.05px #1f2733">5.253.191.177</div>
<svg class="b" style="left:1113px;top:716px;width:16px;height:16px" viewBox="0 0 16 16"><circle cx="8.06" cy="8.10" r="5.3" fill="none" stroke="#6e6e6e" stroke-width="1"/><rect x="7.56" y="5.00" width="1" height="1.1" fill="#6e6e6e"/><rect x="7.56" y="6.60" width="1" height="4.1" fill="#6e6e6e"/></svg>
<div class="t" style="right:531.50px;top:718.67px;font-size:12.2px;line-height:12.2px;color:#1f2733;font-weight:400;font-family:'Liberation Sans', sans-serif;">4</div>
<div class="t" style="right:358.80px;top:718.67px;font-size:12.2px;line-height:12.2px;color:#1f2733;font-weight:400;font-family:'Liberation Sans', sans-serif;">4096</div>
<div class="t" style="right:206.40px;top:718.67px;font-size:12.2px;line-height:12.2px;color:#1f2733;font-weight:400;font-family:'Liberation Sans', sans-serif;">1</div>
<svg class="b" style="left:1781px;top:716px;width:20px;height:16px" viewBox="0 0 20 16"><path d="M3.6 8.90 C5.5 3.90 14.8 3.90 16.9 8.90 C14.8 13.90 5.5 13.90 3.6 8.90Z" fill="#4d7cf4"/><circle cx="10.2" cy="8.90" r="2.9" fill="#fff"/><circle cx="10.2" cy="8.90" r="1.7" fill="#4d7cf4"/></svg>
<div class="b" style="left:303px;top:787px;width:1524px;height:1px;background:#e6e9ed"></div>
<svg class="b" style="left:330px;top:758px;width:16px;height:16px" viewBox="0 0 16 16"><path d="M5.1 7.30 L8.1 10.50 L11.1 7.30" fill="none" stroke="#5a5a5a" stroke-width="1.3"/></svg>
<div class="t" style="left:366.10px;top:760.92px;font-size:11.2px;line-height:11.2px;color:#1f2733;font-weight:400;font-family:'Liberation Sans', sans-serif;letter-spacing:0.2px;-webkit-text-stroke:0.28px #1f2733">v1015</div>
<div class="t" style="left:454.00px;top:761.91px;font-size:12px;line-height:12px;color:#5d6b7a;font-weight:400;font-family:'Liberation Mono', monospace;letter-spacing:-0.74px;-webkit-text-stroke:0.12px #5d6b7a">ae25b897...</div>
<div class="b" style="left:615px;top:756.10px;width:56px;height:22px;border-radius:11px;background:#55a683"></div>
<div class="t" style="left:622.70px;top:762.05px;font-size:12.1px;line-height:12.1px;color:#fff;font-weight:400;font-family:'Liberation Sans', sans-serif;">running</div>
<div class="t" style="left:747.50px;top:760.07px;font-size:13.5px;line-height:13.5px;color:#1f2733;font-weight:400;font-family:'Liberation Sans', sans-serif;">nlkvm2.serverbik.com</div>
<div class="t" style="left:1020.20px;top:761.11px;font-size:12px;line-height:12px;color:#1f2733;font-weight:400;font-family:'Liberation Mono', monospace;letter-spacing:-0.76px;-webkit-text-stroke:0.05px #1f2733">5.253.191.175</div>
<svg class="b" style="left:1113px;top:758px;width:16px;height:16px" viewBox="0 0 16 16"><circle cx="8.06" cy="8.60" r="5.3" fill="none" stroke="#6e6e6e" stroke-width="1"/><rect x="7.56" y="5.50" width="1" height="1.1" fill="#6e6e6e"/><rect x="7.56" y="7.10" width="1" height="4.1" fill="#6e6e6e"/></svg>
<div class="t" style="right:531.50px;top:761.17px;font-size:12.2px;line-height:12.2px;color:#1f2733;font-weight:400;font-family:'Liberation Sans', sans-serif;">4</div>
<div class="t" style="right:358.80px;top:761.17px;font-size:12.2px;line-height:12.2px;color:#1f2733;font-weight:400;font-family:'Liberation Sans', sans-serif;">4096</div>
<div class="t" style="right:206.40px;top:761.17px;font-size:12.2px;line-height:12.2px;color:#1f2733;font-weight:400;font-family:'Liberation Sans', sans-serif;">1</div>
<svg class="b" style="left:1781px;top:758px;width:20px;height:16px" viewBox="0 0 20 16"><path d="M3.6 9.40 C5.5 4.40 14.8 4.40 16.9 9.40 C14.8 14.40 5.5 14.40 3.6 9.40Z" fill="#4d7cf4"/><circle cx="10.2" cy="9.40" r="2.9" fill="#fff"/><circle cx="10.2" cy="9.40" r="1.7" fill="#4d7cf4"/></svg>
<div class="b" style="left:303px;top:829px;width:1524px;height:1px;background:#e6e9ed"></div>
<svg class="b" style="left:330px;top:800px;width:16px;height:16px" viewBox="0 0 16 16"><path d="M5.1 7.30 L8.1 10.50 L11.1 7.30" fill="none" stroke="#5a5a5a" stroke-width="1.3"/></svg>
<div class="t" style="left:366.10px;top:802.92px;font-size:11.2px;line-height:11.2px;color:#1f2733;font-weight:400;font-family:'Liberation Sans', sans-serif;letter-spacing:0.2px;-webkit-text-stroke:0.28px #1f2733">v1004</div>
<div class="t" style="left:454.00px;top:803.91px;font-size:12px;line-height:12px;color:#5d6b7a;font-weight:400;font-family:'Liberation Mono', monospace;letter-spacing:-0.74px;-webkit-text-stroke:0.12px #5d6b7a">ec632c91...</div>
<div class="b" style="left:615px;top:798.10px;width:54px;height:22px;border-radius:11px;background:#e8e8e8"></div>
<div class="t" style="left:622.70px;top:803.46px;font-size:12.8px;line-height:12.8px;color:#1f2733;font-weight:400;font-family:'Liberation Sans', sans-serif;">shutoff</div>
<div class="t" style="left:747.50px;top:802.07px;font-size:13.5px;line-height:13.5px;color:#1f2733;font-weight:400;font-family:'Liberation Sans', sans-serif;">nlkvm2.serverbik.com</div>
<div class="t" style="left:1020.20px;top:803.11px;font-size:12px;line-height:12px;color:#1f2733;font-weight:400;font-family:'Liberation Mono', monospace;letter-spacing:-0.76px;-webkit-text-stroke:0.05px #1f2733">5.253.191.24</div>
<div class="t" style="right:531.50px;top:803.17px;font-size:12.2px;line-height:12.2px;color:#1f2733;font-weight:400;font-family:'Liberation Sans', sans-serif;">4</div>
<div class="t" style="right:358.80px;top:803.17px;font-size:12.2px;line-height:12.2px;color:#1f2733;font-weight:400;font-family:'Liberation Sans', sans-serif;">4096</div>
<div class="t" style="right:206.40px;top:803.17px;font-size:12.2px;line-height:12.2px;color:#1f2733;font-weight:400;font-family:'Liberation Sans', sans-serif;">1</div>
<svg class="b" style="left:1781px;top:800px;width:20px;height:16px" viewBox="0 0 20 16"><path d="M3.6 9.40 C5.5 4.40 14.8 4.40 16.9 9.40 C14.8 14.40 5.5 14.40 3.6 9.40Z" fill="#4d7cf4"/><circle cx="10.2" cy="9.40" r="2.9" fill="#fff"/><circle cx="10.2" cy="9.40" r="1.7" fill="#4d7cf4"/></svg>
</body></html>
